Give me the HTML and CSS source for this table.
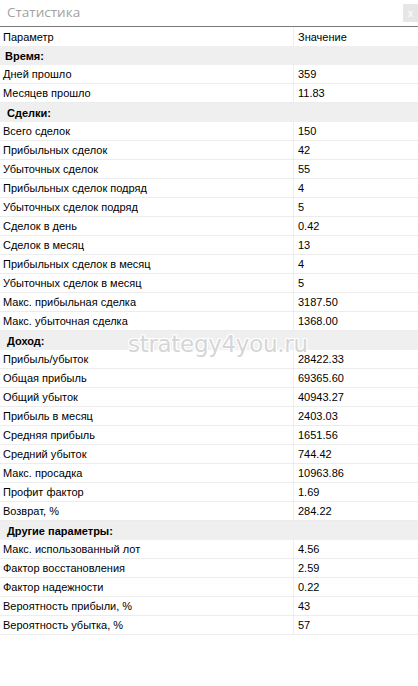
FILE: index.html
```html
<!DOCTYPE html>
<html>
<head>
<meta charset="utf-8">
<link rel="stylesheet" href="styles.css">
</head>
<body>
<div class="panel">
  <div class="titlebar">
    <span class="title">Статистика</span>
    <span class="close">x</span>
  </div>
  <div class="table">
    <div class="row head"><div class="c1">Параметр</div><div class="c2">Значение</div></div>
    <div class="row sec"><div class="c1">Время:</div></div>
    <div class="row"><div class="c1">Дней прошло</div><div class="c2">359</div></div>
    <div class="row"><div class="c1">Месяцев прошло</div><div class="c2">11.83</div></div>
    <div class="row sec"><div class="c1 ind">Сделки:</div></div>
    <div class="row"><div class="c1">Всего сделок</div><div class="c2">150</div></div>
    <div class="row"><div class="c1">Прибыльных сделок</div><div class="c2">42</div></div>
    <div class="row"><div class="c1">Убыточных сделок</div><div class="c2">55</div></div>
    <div class="row"><div class="c1">Прибыльных сделок подряд</div><div class="c2">4</div></div>
    <div class="row"><div class="c1">Убыточных сделок подряд</div><div class="c2">5</div></div>
    <div class="row"><div class="c1">Сделок в день</div><div class="c2">0.42</div></div>
    <div class="row"><div class="c1">Сделок в месяц</div><div class="c2">13</div></div>
    <div class="row"><div class="c1">Прибыльных сделок в месяц</div><div class="c2">4</div></div>
    <div class="row"><div class="c1">Убыточных сделок в месяц</div><div class="c2">5</div></div>
    <div class="row"><div class="c1">Макс. прибыльная сделка</div><div class="c2">3187.50</div></div>
    <div class="row"><div class="c1">Макс. убыточная сделка</div><div class="c2">1368.00</div></div>
    <div class="row sec"><div class="c1 ind">Доход:</div></div>
    <div class="row"><div class="c1">Прибыль/убыток</div><div class="c2">28422.33</div></div>
    <div class="row"><div class="c1">Общая прибыль</div><div class="c2">69365.60</div></div>
    <div class="row"><div class="c1">Общий убыток</div><div class="c2">40943.27</div></div>
    <div class="row"><div class="c1">Прибыль в месяц</div><div class="c2">2403.03</div></div>
    <div class="row"><div class="c1">Средняя прибыль</div><div class="c2">1651.56</div></div>
    <div class="row"><div class="c1">Средний убыток</div><div class="c2">744.42</div></div>
    <div class="row"><div class="c1">Макс. просадка</div><div class="c2">10963.86</div></div>
    <div class="row"><div class="c1">Профит фактор</div><div class="c2">1.69</div></div>
    <div class="row"><div class="c1">Возврат, %</div><div class="c2">284.22</div></div>
    <div class="row sec"><div class="c1 ind">Другие параметры:</div></div>
    <div class="row"><div class="c1">Макс. использованный лот</div><div class="c2">4.56</div></div>
    <div class="row"><div class="c1">Фактор восстановления</div><div class="c2">2.59</div></div>
    <div class="row"><div class="c1">Фактор надежности</div><div class="c2">0.22</div></div>
    <div class="row"><div class="c1">Вероятность прибыли, %</div><div class="c2">43</div></div>
    <div class="row"><div class="c1">Вероятность убытка, %</div><div class="c2">57</div></div>
    <div class="watermark">strategy4you.ru</div>
  </div>
</div>
</body>
</html>
```
FILE: styles.css
```css
html, body {
  margin: 0;
  padding: 0;
  background: #fff;
}
.panel {
  width: 418px;
  font-family: "Liberation Sans", Arial, sans-serif;
  font-size: 11px;
  color: #000;
}
.titlebar {
  height: 27px;
  box-sizing: border-box;
  border-bottom: 1px solid #7a7a7a;
  display: flex;
  align-items: flex-start;
  justify-content: space-between;
}
.title {
  padding-left: 7px;
  padding-top: 4px;
  font-family: "Open Sans", "Liberation Sans", sans-serif;
  font-size: 13.5px;
  line-height: 17px;
  color: #a2a2a2;
}
.close {
  width: 15px;
  height: 18px;
  margin-top: 4px;
  background: #e6e6e6;
  color: #fafafa;
  font-size: 10px;
  font-weight: bold;
  display: flex;
  align-items: center;
  justify-content: center;
}
.table {
  position: relative;
}
.row {
  display: grid;
  grid-template-columns: 294px 1fr;
  height: 19px;
  box-sizing: border-box;
  border-bottom: 1px solid #ececec;
  align-items: center;
}
.c1 {
  padding-left: 3px;
  height: 100%;
  display: flex;
  align-items: center;
  border-right: 1px solid #efefef;
  box-sizing: border-box;
}
.c2 {
  padding-left: 4px;
}
.head {
  border-bottom: none;
}
.sec {
  background: #efefef;
  border-bottom: none;
  font-weight: bold;
}
.sec .c1 {
  border-right: none;
  padding-left: 5px;
}
.sec .c1.ind {
  padding-left: 7px;
}
.watermark {
  position: absolute;
  left: 128px;
  top: 304px;
  font-family: "DejaVu Sans", Verdana, sans-serif;
  font-size: 23px;
  color: #d6d6d6;
  text-shadow: 1px 0 0 #fff, -1px 0 0 #fff, 0 1px 0 #fff, 0 -1px 0 #fff, 1px 1px 0 #fff, -1px -1px 0 #fff, 1px -1px 0 #fff, -1px 1px 0 #fff;
  letter-spacing: -0.3px;
  pointer-events: none;
}
```
